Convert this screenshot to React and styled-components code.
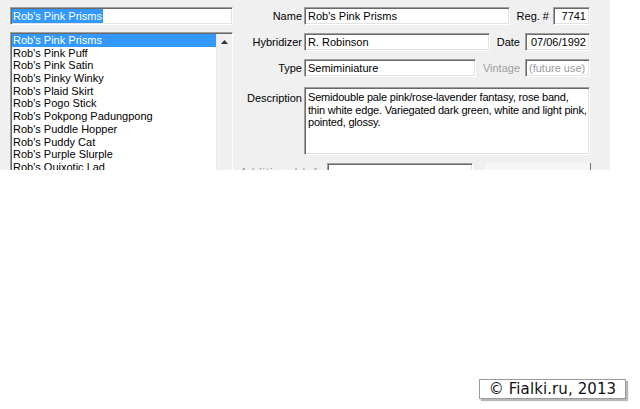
import React from "react";
import styled, { createGlobalStyle } from "styled-components";

const Global = createGlobalStyle`
  html, body { margin: 0; padding: 0; background: #fff; }
  body { font-family: "Liberation Sans", Arial, sans-serif; }
`;

const Page = styled.div`
  position: relative;
  width: 640px;
  height: 409px;
  overflow: hidden;
  background: #fff;
`;

const Panel = styled.div`
  width: 610px;
  height: 170px;
  background: #f0f0f0;
  overflow: hidden;
  display: flex;
  padding: 7px 0 0 10px;
  box-sizing: border-box;
  font-size: 11px;
  color: #000;
`;

const LeftCol = styled.div`
  width: 223px;
  display: flex;
  flex-direction: column;
  gap: 7px;
`;

const Sunken = styled.div`
  box-sizing: border-box;
  background: #fff;
  border: 1px solid;
  border-color: #a0a0a0 #ffffff #ffffff #a0a0a0;
  box-shadow: inset 1px 1px 0 #696969, inset -1px -1px 0 #e3e3e3;
`;

const Field = styled(Sunken)`
  width: ${(p) => p.$w}px;
  height: ${(p) => p.$h || 18}px;
  padding: ${(p) => (p.$multi ? "3px 2px 3px 3px" : "0 3px")};
  display: flex;
  align-items: ${(p) => (p.$multi ? "flex-start" : "center")};
  justify-content: ${(p) => (p.$right ? "flex-end" : "flex-start")};
  color: ${(p) => (p.$dim ? "#9a9a9a" : "#000")};
  line-height: 12.5px;
  letter-spacing: ${(p) => (p.$multi ? "-0.2px" : "0")};
  white-space: ${(p) => (p.$multi ? "normal" : "nowrap")};
  overflow: hidden;
  flex: none;
`;

const Selected = styled.span`
  background: #3399ff;
  color: #fff;
  margin-left: -2px;
  padding: 1px 1px;
`;

const ListBox = styled(Sunken)`
  height: 150px;
  display: flex;
  padding: 1px 0 0 1px;
`;

const Items = styled.div`
  flex: 1;
  display: flex;
  flex-direction: column;
`;

const Item = styled.div`
  height: 12.7px;
  line-height: 12.7px;
  padding-left: 1px;
  white-space: nowrap;
  background: ${(p) => (p.$sel ? "#3399ff" : "transparent")};
  color: ${(p) => (p.$sel ? "#fff" : "#000")};
`;

const ScrollBar = styled.div`
  width: 16px;
  background: #f0f0f0;
  border-left: 1px solid #e8e8e8;
  display: flex;
  justify-content: center;
  padding-top: 6px;
  box-sizing: border-box;
`;

const RightCol = styled.div`
  margin-left: 7px;
  width: 350px;
  display: flex;
  flex-direction: column;
`;

const Row = styled.div`
  display: flex;
  align-items: ${(p) => (p.$top ? "flex-start" : "center")};
  margin-bottom: ${(p) => p.$mb}px;
`;

const Label = styled.div`
  width: ${(p) => p.$w}px;
  text-align: right;
  padding-right: ${(p) => p.$pr ?? 2}px;
  box-sizing: border-box;
  color: ${(p) => (p.$dim ? "#a0a0a0" : "#000")};
  white-space: nowrap;
  flex: none;
  padding-top: ${(p) => (p.$top ? 5 : 0)}px;
`;

const Faded = styled.span`
  color: #9a9a9a;
  letter-spacing: 1px;
`;

const Plate = styled.div`
  box-sizing: border-box;
  width: 106px;
  height: 18px;
  margin-left: 12px;
  background: #f6f6f6;
  border-right: 1px solid #707070;
  flex: none;
`;

const Copyright = styled.div`
  position: absolute;
  left: 479px;
  top: 379px;
  width: 147px;
  height: 20px;
  box-sizing: border-box;
  background: #fff;
  border: 1px solid #9a9a9a;
  box-shadow: 2px 2px 1px #b8b8b8;
  font-family: "DejaVu Sans", Verdana, sans-serif;
  font-size: 15px;
  line-height: 18px;
  text-align: center;
  color: #111;
  white-space: nowrap;
  letter-spacing: 0.1px;
`;

const names = [
  "Rob's Pink Prisms",
  "Rob's Pink Puff",
  "Rob's Pink Satin",
  "Rob's Pinky Winky",
  "Rob's Plaid Skirt",
  "Rob's Pogo Stick",
  "Rob's Pokpong Padungpong",
  "Rob's Puddle Hopper",
  "Rob's Puddy Cat",
  "Rob's Purple Slurple",
  "Rob's Quixotic Lad",
];

export default function App() {
  return (
    <Page>
      <Global />
      <Panel>
        <LeftCol>
          <Field $w={223}>
            <Selected>Rob's Pink Prisms</Selected>
          </Field>
          <ListBox>
            <Items>
              {names.map((n, i) => (
                <Item key={n} $sel={i === 0}>
                  {n}
                </Item>
              ))}
            </Items>
            <ScrollBar>
              <svg width="7" height="4" viewBox="0 0 7 4">
                <path d="M0 4 L3.5 0 L7 4 Z" fill="#333" />
              </svg>
            </ScrollBar>
          </ListBox>
        </LeftCol>
        <RightCol>
          <Row $mb={8}>
            <Label $w={64}>Name</Label>
            <Field $w={206}>Rob's Pink Prisms</Field>
            <Label $w={43} $pr={4}>Reg. #</Label>
            <Field $w={37} $right>7741</Field>
          </Row>
          <Row $mb={8}>
            <Label $w={64}>Hybridizer</Label>
            <Field $w={186}>R. Robinson</Field>
            <Label $w={35} $pr={5}>Date</Label>
            <Field $w={65} $right>07/06/1992</Field>
          </Row>
          <Row $mb={10}>
            <Label $w={64}>Type</Label>
            <Field $w={172}>Semiminiature</Field>
            <Label $w={49} $pr={5} $dim>Vintage</Label>
            <Field $w={65} $dim>(future use)</Field>
          </Row>
          <Row $mb={8} $top>
            <Label $w={64} $top>Description</Label>
            <Field $w={286} $h={68} $multi>
              Semidouble pale pink/rose-lavender fantasy, rose band, thin white
              edge. Variegated dark green, white and light pink, pointed, glossy.
            </Field>
          </Row>
          <Row $mb={0}>
            <Label $w={87} $pr={7}>
              <Faded>Additional Info</Faded>
            </Label>
            <Field $w={146}> </Field>
            <Plate />
          </Row>
        </RightCol>
      </Panel>
      <Copyright>© Fialki.ru, 2013</Copyright>
    </Page>
  );
}
